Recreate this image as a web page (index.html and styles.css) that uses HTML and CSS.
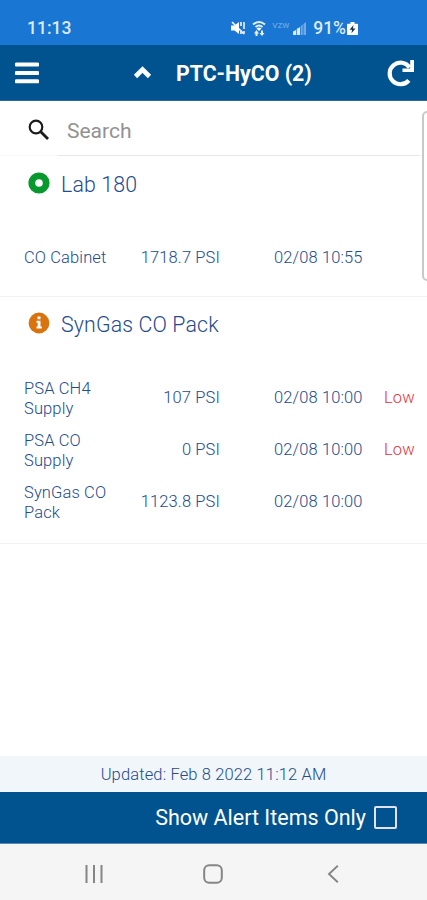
FILE: index.html
```html
<!DOCTYPE html>
<html lang="en">
  <head>
    <meta charset="UTF-8" />
    <meta name="viewport" content="width=device-width, initial-scale=1.0" />
    <title>PTC-HyCO</title>
    <link rel="stylesheet" href="styles.css">
  </head>
  <body>
    <div class="status-bar">
      <span class="clock">11:13</span>
      <div class="status-icons">
        <svg class="mute" width="16" height="16" viewBox="0 0 16 16">
          <path d="M1 5.500h3.500L9 2v12l-4.500-3.500H1z" fill="#fff" />
          <path d="M2 2l12 12" stroke="#fff" stroke-width="1.600" />
          <path d="M11 2v4M11 10v4M14 2v7M14 11v3" stroke="#d6e7fa" stroke-width="1.800" />
        </svg>
        <svg class="wifi" width="14" height="17" viewBox="0 0 14 17">
          <path d="M1 4.500Q7-.500 13 4.500M3.500 7Q7 4 10.500 7" fill="none" stroke="#e6f0fc" stroke-width="2" />
          <path d="M4.500 8.500Q7 6.500 9.500 8.500L7 11z" fill="#fff" />
          <path d="M2 13.500L4.500 10 7 13.500H5.500V16h-2v-2.500zM7.500 13H9v-2.500h2V13h1.500L10 16z" fill="#e6f0fc" />
        </svg>
        <span class="carrier">VZW</span>
        <svg class="signal" width="13" height="13" viewBox="0 0 13 13">
          <path d="M0 13V9.500L3 8v5zM3.700 13V7l3.300-2v8z" fill="#dceafa" />
          <path d="M7.700 13V4l2-1.500V13zM10.500 13V2L13 0v13z" fill="#71aae7" />
        </svg>
        <span class="percent">91%</span>
        <svg class="battery" width="11" height="13" viewBox="0 0 11 15" preserveAspectRatio="none">
          <path d="M3.500 0h4v2H10q1 0 1 1v11q0 1-1 1H1q-1 0-1-1V3q0-1 1-1h2.500z" fill="#fff" />
          <path d="M6.500 3.500L2.500 9H5l-.500 4L8.500 7.500H6z" fill="#1c3550" />
        </svg>
      </div>
    </div>

    <header class="header">
      <svg class="menu" width="24" height="22" viewBox="0 0 24 22">
        <path d="M1.500 2.500h21M1.500 11h21M1.500 19.300h21" stroke="#fff" stroke-width="4" stroke-linecap="round" />
      </svg>
      <svg class="chevron" width="19" height="13" viewBox="0 0 19 13">
        <path d="M2.500 10.500l7-7 7 7" fill="none" stroke="#fff" stroke-width="4.600" />
      </svg>
      <h1 class="title">PTC-HyCO (2)</h1>
      <svg class="refresh" width="28" height="28" viewBox="0 0 28 28">
        <path d="M21.800 21.300A10.800 10.800 0 1 1 22.500 8.500" fill="none" stroke="#fff" stroke-width="4.200" />
        <path d="M27 1v12H15.500V9.500h7.700V1z" fill="#fff" />
      </svg>
    </header>

    <main class="content">
      <div class="search">
        <svg width="22" height="22" viewBox="0 0 22 22">
          <circle cx="8" cy="8" r="6.300" fill="none" stroke="#1c1c1c" stroke-width="2.200" />
          <path d="M12.500 12.500l7.500 7.500" stroke="#1c1c1c" stroke-width="2.800" />
        </svg>
        <div class="search-field">Search</div>
      </div>

      <section class="group group-lab">
        <h2 class="group-title">
          <svg width="22" height="22" viewBox="0 0 22 22">
            <circle cx="11" cy="11" r="7.200" fill="#fff" stroke="#07992e" stroke-width="6.800" />
          </svg>
          Lab 180
        </h2>
        <div class="row">
          <span class="name">CO Cabinet</span>
          <span class="value">1718.7 PSI</span>
          <span class="date">02/08 10:55</span>
        </div>
      </section>

      <section class="group group-syngas">
        <h2 class="group-title">
          <svg width="22" height="22" viewBox="0 0 22 22">
            <circle cx="11" cy="11" r="10.400" fill="#d9730d" />
            <path d="M9.500 4.500h3v2.700h-3zM8.500 8.700h4v5.800h1.300v2H8.500v-2h1.200v-3.800H8.500z" fill="#fff" />
          </svg>
          SynGas CO Pack
        </h2>
        <div class="row">
          <span class="name">PSA CH4 Supply</span>
          <span class="value">107 PSI</span>
          <span class="date">02/08 10:00</span>
          <span class="alert">Low</span>
        </div>
        <div class="row">
          <span class="name">PSA CO Supply</span>
          <span class="value">0 PSI</span>
          <span class="date">02/08 10:00</span>
          <span class="alert">Low</span>
        </div>
        <div class="row">
          <span class="name">SynGas CO Pack</span>
          <span class="value">1123.8 PSI</span>
          <span class="date">02/08 10:00</span>
        </div>
      </section>
      <div class="edge-handle"></div>
    </main>

    <div class="updated">Updated: Feb 8 2022 11:12 AM</div>
    <footer class="footer">
      <span>Show Alert Items Only</span>
      <span class="checkbox"></span>
    </footer>

    <nav class="nav-bar">
      <svg width="18" height="18" viewBox="0 0 18 18">
        <path d="M1.500 0v18M9 0v18M16.500 0v18" stroke="#858585" stroke-width="2" />
      </svg>
      <svg class="home" width="20" height="20" viewBox="0 0 20 20">
        <rect x="1.200" y="1.200" width="17.600" height="17.600" rx="5" fill="none" stroke="#858585" stroke-width="2" />
      </svg>
      <svg width="12" height="18" viewBox="0 0 12 18">
        <path d="M10.800.800L2 9l8.800 8.200" fill="none" stroke="#858585" stroke-width="1.900" />
      </svg>
    </nav>
  </body>
</html>
```

FILE: styles.css
```css
* {
  box-sizing: border-box;
}
body {
  margin: 0;
  height: 900px;
  display: flex;
  flex-direction: column;
  font-family: Roboto, "Liberation Sans", sans-serif;
  background: #fff;
  color: #244b8c;
  overflow: hidden;
}
svg {
  display: block;
  flex: none;
}
h1,
h2 {
  margin: 0;
}

/* Phone status bar */
.status-bar {
  height: 45px;
  padding: 11px 69px 0 27px;
  display: flex;
  justify-content: space-between;
  align-items: center;
  background: #1976d2;
  color: #dceafa;
}
.clock {
  font-size: 17.5px;
  font-weight: 500;
}
.status-icons {
  display: flex;
  align-items: center;
}
.wifi {
  margin-left: 6px;
}
.carrier {
  margin: -5px 0 0 6px;
  width: 18px;
  font-size: 8px;
  font-weight: 500;
  color: #69a5e5;
}
.signal {
  margin: 0 0 0 3px;
}
.percent {
  margin-left: 7px;
  margin-top: -1px;
  font-size: 17.5px;
  font-weight: 500;
}
.battery {
  margin-left: 1px;
}

/* App header */
.header {
  height: 56px;
  padding: 0 12px 0 15px;
  display: flex;
  align-items: center;
  background: #00538f;
  border-bottom: 1px solid #34669d;
  color: #fff;
}
.chevron {
  margin-left: 94px;
}
.title {
  margin-left: 24px;
  padding-top: 2px;
  font-size: 21.3px;
  font-weight: 700;
  white-space: nowrap;
}
.refresh {
  margin-left: auto;
}

/* List */
.content {
  position: relative;
  flex: 1;
}
.search {
  height: 55px;
  padding: 3px 0 0 28px;
  display: flex;
  align-items: center;
  border-bottom: 1px solid #f6f7f8;
}
.search-field {
  flex: 1;
  height: 52px;
  margin: 0 7px 0 8px;
  padding-left: 9px;
  line-height: 54px;
  border-bottom: 1px solid #e5e9eb;
  font-size: 21px;
  color: #929292;
}
.group {
  border-bottom: 1px solid #f0f1f2;
  padding: 0 12px 0 24px;
}
.group-lab {
  height: 141px;
}
.group-lab .group-title {
  height: 76px;
  padding-top: 17px;
}
.group-syngas {
  height: 247px;
}
.group-title {
  height: 75px;
  padding: 16px 0 0 4px;
  display: flex;
  align-items: flex-start;
  gap: 11px;
  font-size: 21.3px;
  line-height: 24px;
  font-weight: 300;
  letter-spacing: 0.15px;
}
.group-title svg {
  margin-top: -1px;
}
.row {
  height: 52px;
  display: grid;
  grid-template-columns: 90px 106px 54px 110px 1fr;
  align-items: center;
  font-size: 16.5px;
  font-weight: 300;
  line-height: 20px;
  letter-spacing: 0.12px;
}
.name {
  padding-top: 1px;
}
.group-lab .name {
  padding-top: 0;
}
.value {
  text-align: right;
}
.date {
  grid-column: 4;
}
.alert {
  color: #e63238;
}
.edge-handle {
  position: absolute;
  top: 10px;
  right: -8px;
  width: 13px;
  height: 170px;
  border: 2px solid #c9c9c9;
  border-radius: 5px;
  background: #fff;
}

/* Bottom area */
.updated {
  height: 36px;
  line-height: 37px;
  text-align: center;
  font-size: 16.5px;
  font-weight: 300;
  letter-spacing: 0.14px;
  background: #f0f6fa;
}
.footer {
  height: 52px;
  padding-right: 30px;
  display: flex;
  align-items: center;
  justify-content: flex-end;
  gap: 8px;
  background: #00538f;
  border-bottom: 1px solid #5b87b4;
  color: #fff;
  font-size: 21.5px;
}
.checkbox {
  width: 23px;
  height: 23px;
  border: 2px solid #e3e2f4;
  border-radius: 2px;
}
.nav-bar {
  height: 56px;
  padding: 3px 88px 0 85px;
  display: flex;
  align-items: center;
  justify-content: space-between;
  background: #f5f5f5;
}
.home {
  margin-right: 5px;
}
```
